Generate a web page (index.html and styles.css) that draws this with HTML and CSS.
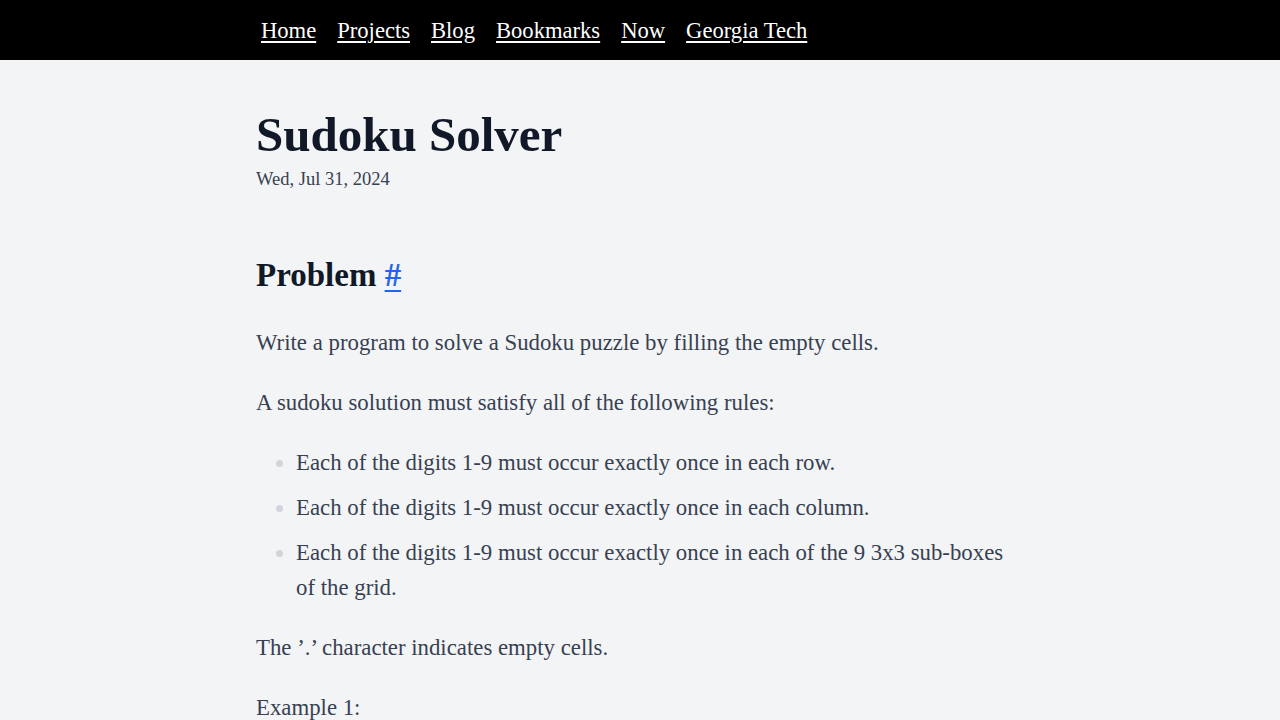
FILE: index.html
```html
<!DOCTYPE html>
<html lang="en">
<head>
<meta charset="utf-8">
<title>Sudoku Solver</title>
<link rel="stylesheet" href="styles.css">
</head>
<body>
<nav class="topnav">
  <div class="topnav-inner">
    <a href="#">Home</a>
    <a href="#">Projects</a>
    <a href="#">Blog</a>
    <a href="#">Bookmarks</a>
    <a href="#">Now</a>
    <a href="#">Georgia Tech</a>
  </div>
</nav>
<main class="post">
  <header class="post-header">
    <h1 class="post-title">Sudoku Solver</h1>
    <div class="post-date">Wed, Jul 31, 2024</div>
  </header>
  <article class="prose">
    <h2>Problem <a class="anchor" href="#problem">#</a></h2>
    <p>Write a program to solve a Sudoku puzzle by filling the empty cells.</p>
    <p>A sudoku solution must satisfy all of the following rules:</p>
    <ul>
      <li>Each of the digits 1-9 must occur exactly once in each row.</li>
      <li>Each of the digits 1-9 must occur exactly once in each column.</li>
      <li>Each of the digits 1-9 must occur exactly once in each of the 9 3x3 sub-boxes of the grid.</li>
    </ul>
    <p>The ’.’ character indicates empty cells.</p>
    <p>Example 1:</p>
  </article>
</main>
</body>
</html>
```
FILE: styles.css
```css
html, body {
  margin: 0;
  padding: 0;
}
body {
  background: #f3f4f6;
  font-family: "Liberation Serif", "Times New Roman", serif;
  color: #374151;
}
.topnav {
  background: #000;
  height: 60px;
}
.topnav-inner {
  width: 768px;
  margin: 0 auto;
  height: 60px;
  display: flex;
  align-items: center;
  gap: 21px;
  padding-left: 5px;
  padding-top: 2px;
  box-sizing: border-box;
}
.topnav-inner a {
  color: #fff;
  font-size: 22.6px;
  text-decoration: underline;
  text-underline-offset: 3px;
}
.post {
  width: 768px;
  margin: 0 auto;
  padding-top: 48px;
}
.post-title {
  margin: 0;
  font-size: 49px;
  line-height: 54px;
  font-weight: 700;
  color: #111827;
}
.post-date {
  margin-top: 4px;
  font-size: 18.5px;
  line-height: 27px;
  color: #374151;
}
.prose {
  font-size: 22.8px;
  line-height: 35px;
}
.prose h2 {
  margin: 62px 0 30px;
  font-size: 33px;
  line-height: 40px;
  font-weight: 700;
  color: #111827;
}
.prose .anchor {
  color: #2563eb;
  text-decoration: underline;
  text-decoration-thickness: 2px;
  text-underline-offset: 4px;
}
.prose p {
  margin: 25px 0;
}
.prose ul {
  margin: 25px 0;
  padding-left: 40px;
  list-style: disc;
}
.prose li {
  margin: 10px 0;
  padding-left: 0;
}
.prose li::marker {
  color: #d1d5db;
}
```
